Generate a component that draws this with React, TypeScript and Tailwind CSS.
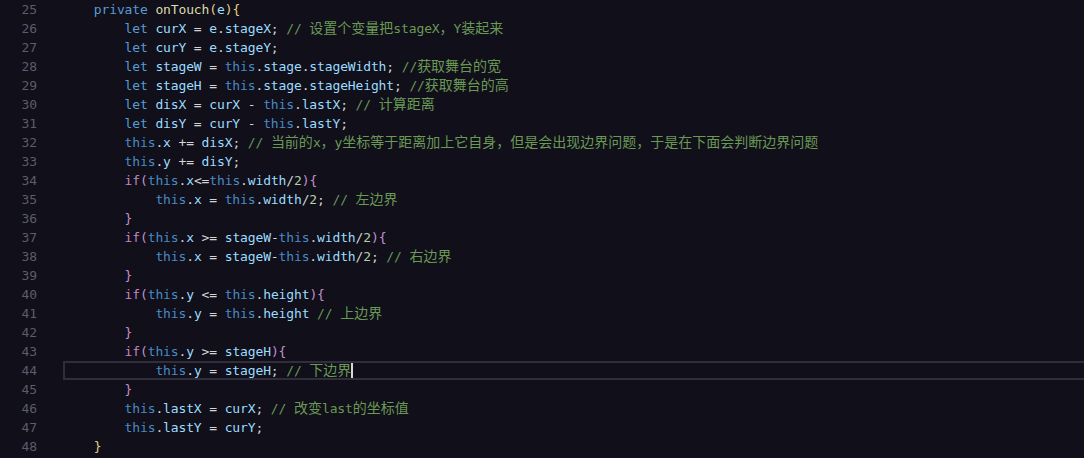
type Tok = [string, string];

const C = {
  kw: "text-[#569cd6]",
  th: "text-[#4a8ac4]",
  fn: "text-[#dcdcaa]",
  v: "text-[#9cdcfe]",
  ctl: "text-[#c586c0]",
  p: "text-[#d4d4d4]",
  n: "text-[#b5cea8]",
  cm: "text-[#6a9955]",
  b1: "text-[#e2cf86]",
  b2: "text-[#c48fcf]",
};

const sp = (n: number): Tok => [" ".repeat(n), C.p];

const lines: Tok[][] = [
  [sp(4), ["private", C.kw], [" ", C.p], ["onTouch", C.fn], ["(", C.b1], ["e", C.v], [")", C.b1], ["{", C.b1]],
  [sp(8), ["let", C.kw], [" ", C.p], ["curX", C.v], [" = ", C.p], ["e", C.v], [".", C.p], ["stageX", C.v], ["; ", C.p], ["// 设置个变量把stageX，Y装起来", C.cm]],
  [sp(8), ["let", C.kw], [" ", C.p], ["curY", C.v], [" = ", C.p], ["e", C.v], [".", C.p], ["stageY", C.v], [";", C.p]],
  [sp(8), ["let", C.kw], [" ", C.p], ["stageW", C.v], [" = ", C.p], ["this", C.th], [".", C.p], ["stage", C.v], [".", C.p], ["stageWidth", C.v], ["; ", C.p], ["//获取舞台的宽", C.cm]],
  [sp(8), ["let", C.kw], [" ", C.p], ["stageH", C.v], [" = ", C.p], ["this", C.th], [".", C.p], ["stage", C.v], [".", C.p], ["stageHeight", C.v], ["; ", C.p], ["//获取舞台的高", C.cm]],
  [sp(8), ["let", C.kw], [" ", C.p], ["disX", C.v], [" = ", C.p], ["curX", C.v], [" - ", C.p], ["this", C.th], [".", C.p], ["lastX", C.v], ["; ", C.p], ["// 计算距离", C.cm]],
  [sp(8), ["let", C.kw], [" ", C.p], ["disY", C.v], [" = ", C.p], ["curY", C.v], [" - ", C.p], ["this", C.th], [".", C.p], ["lastY", C.v], [";", C.p]],
  [sp(8), ["this", C.th], [".", C.p], ["x", C.v], [" += ", C.p], ["disX", C.v], ["; ", C.p], ["// 当前的x，y坐标等于距离加上它自身，但是会出现边界问题，于是在下面会判断边界问题", C.cm]],
  [sp(8), ["this", C.th], [".", C.p], ["y", C.v], [" += ", C.p], ["disY", C.v], [";", C.p]],
  [sp(8), ["if", C.ctl], ["(", C.b2], ["this", C.th], [".", C.p], ["x", C.v], ["<=", C.p], ["this", C.th], [".", C.p], ["width", C.v], ["/", C.p], ["2", C.n], [")", C.b2], ["{", C.b2]],
  [sp(12), ["this", C.th], [".", C.p], ["x", C.v], [" = ", C.p], ["this", C.th], [".", C.p], ["width", C.v], ["/", C.p], ["2", C.n], ["; ", C.p], ["// 左边界", C.cm]],
  [sp(8), ["}", C.b2]],
  [sp(8), ["if", C.ctl], ["(", C.b2], ["this", C.th], [".", C.p], ["x", C.v], [" >= ", C.p], ["stageW", C.v], ["-", C.p], ["this", C.th], [".", C.p], ["width", C.v], ["/", C.p], ["2", C.n], [")", C.b2], ["{", C.b2]],
  [sp(12), ["this", C.th], [".", C.p], ["x", C.v], [" = ", C.p], ["stageW", C.v], ["-", C.p], ["this", C.th], [".", C.p], ["width", C.v], ["/", C.p], ["2", C.n], ["; ", C.p], ["// 右边界", C.cm]],
  [sp(8), ["}", C.b2]],
  [sp(8), ["if", C.ctl], ["(", C.b2], ["this", C.th], [".", C.p], ["y", C.v], [" <= ", C.p], ["this", C.th], [".", C.p], ["height", C.v], [")", C.b2], ["{", C.b2]],
  [sp(12), ["this", C.th], [".", C.p], ["y", C.v], [" = ", C.p], ["this", C.th], [".", C.p], ["height", C.v], [" ", C.p], ["// 上边界", C.cm]],
  [sp(8), ["}", C.b2]],
  [sp(8), ["if", C.ctl], ["(", C.b2], ["this", C.th], [".", C.p], ["y", C.v], [" >= ", C.p], ["stageH", C.v], [")", C.b2], ["{", C.b2]],
  [sp(12), ["this", C.th], [".", C.p], ["y", C.v], [" = ", C.p], ["stageH", C.v], ["; ", C.p], ["// 下边界", C.cm]],
  [sp(8), ["}", C.b2]],
  [sp(8), ["this", C.th], [".", C.p], ["lastX", C.v], [" = ", C.p], ["curX", C.v], ["; ", C.p], ["// 改变last的坐标值", C.cm]],
  [sp(8), ["this", C.th], [".", C.p], ["lastY", C.v], [" = ", C.p], ["curY", C.v], [";", C.p]],
  [sp(4), ["}", C.b1]],
];

const CURRENT = 44;

// CJK glyphs get their own size so they come out 14px wide like the original
function Text({ s }: { s: string }) {
  const parts = s.split(/([\u3000-\u9fff\uff00-\uffef]+)/).filter(Boolean);
  return (
    <>
      {parts.map((part, i) =>
        /[\u3000-\u9fff\uff00-\uffef]/.test(part) ? (
          <span key={i} className="text-[14px] tracking-normal">
            {part}
          </span>
        ) : (
          <span key={i}>{part}</span>
        )
      )}
    </>
  );
}

export default function App() {
  return (
    <div
      className="w-[1084px] h-[458px] overflow-hidden bg-[#100f1a] text-[13px] leading-[19px] tracking-[-0.13px] whitespace-pre"
      style={{ fontFamily: '"DejaVu Sans Mono", "Noto Sans CJK SC", monospace' }}
    >
      {lines.map((toks, i) => {
        const num = 25 + i;
        const current = num === CURRENT;
        return (
          <div key={num} className="flex h-[19px]">
            <div className="w-[63px] shrink-0 pr-[26px] text-right text-[#5c5c6a]">{num}</div>
            <div className="relative flex-1">
              {current && (
                <div className="pointer-events-none absolute inset-0 border-2 border-r-0 border-[#2f2e3a]" />
              )}
              {toks.map(([s, cls], j) => (
                <span key={j} className={cls}>
                  <Text s={s} />
                </span>
              ))}
              {current && (
                <span className="inline-block w-[2px] h-[16px] align-[-3px] bg-[#d8d8d8]" />
              )}
            </div>
          </div>
        );
      })}
    </div>
  );
}
